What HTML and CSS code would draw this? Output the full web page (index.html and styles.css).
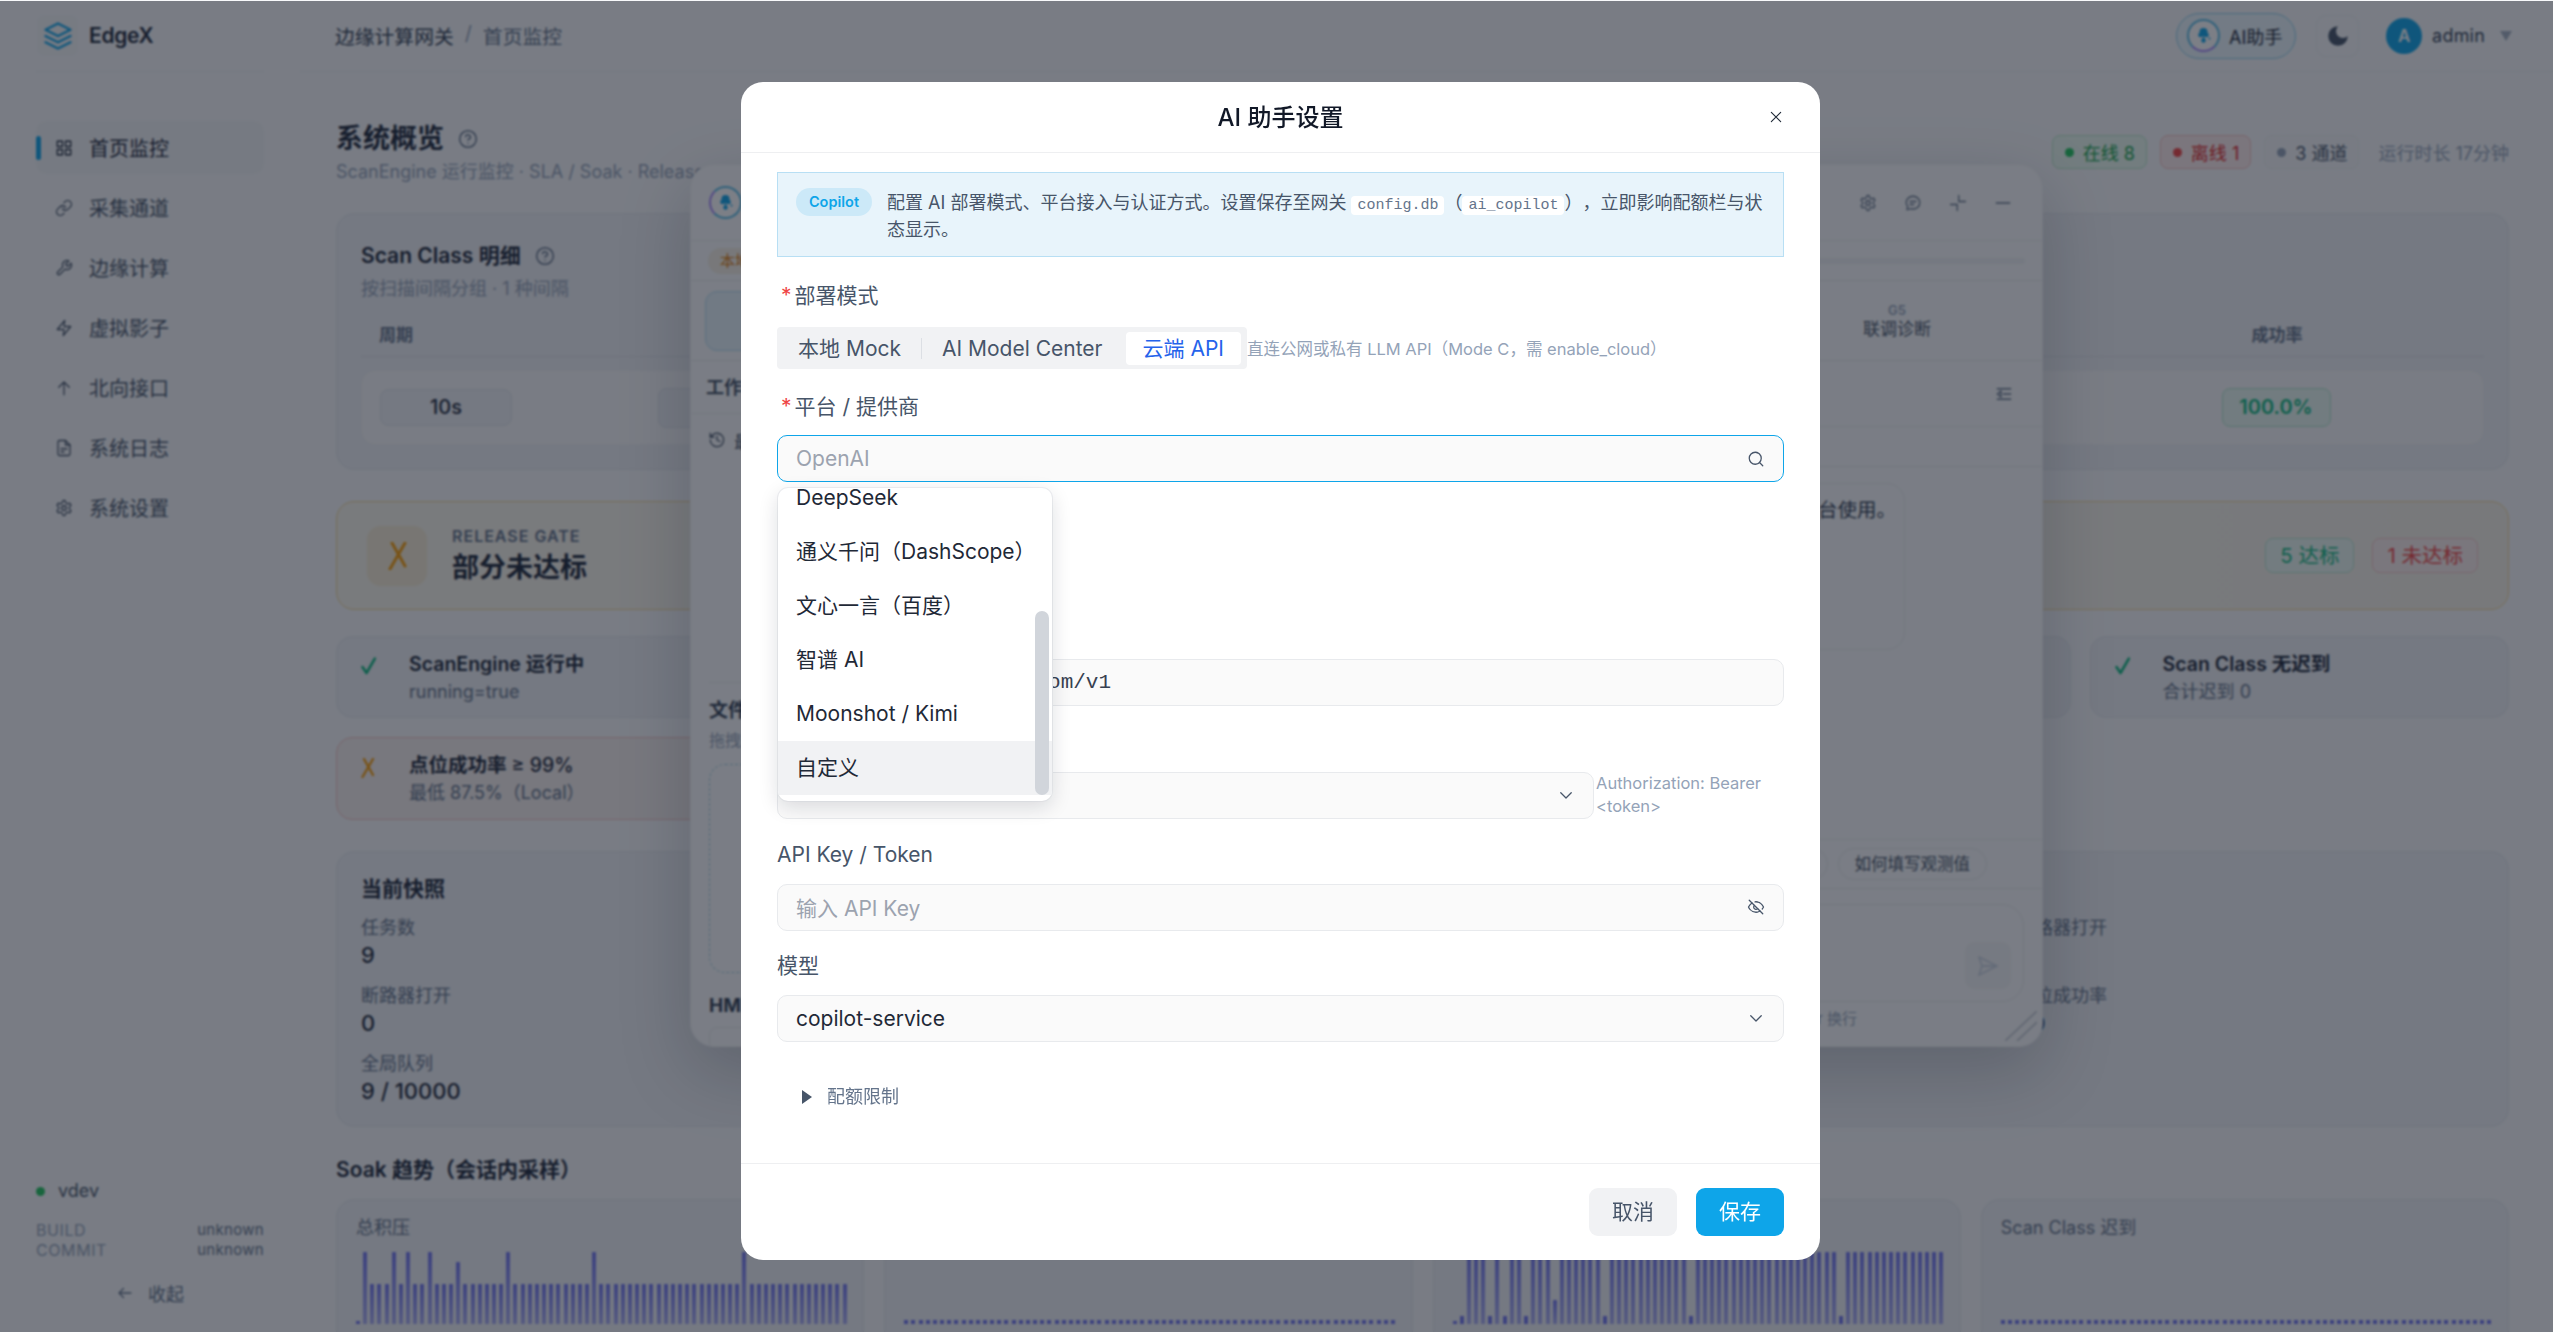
FILE: index.html
```html
<!DOCTYPE html>
<html lang="zh-CN">
<head>
    <meta charset="UTF-8">
    <title>EdgeX - 首页监控</title>
    <link rel="stylesheet" href="styles.css">
</head>
<body>

<div class="app">

    <!-- SIDEBAR -->
    <aside class="sidebar">
        <div class="brand">
            <span class="brand-logo">
                <svg class="ico" viewBox="0 0 24 24" width="30" height="30"><path d="M12 2 2 7l10 5 10-5-10-5z"/><path d="m2 12 10 5 10-5"/><path d="m2 17 10 5 10-5"/></svg>
            </span>
            <span class="brand-name">EdgeX</span>
        </div>
        <nav class="nav">
            <a class="nav-item active">
                <svg class="ico" viewBox="0 0 24 24"><rect x="3" y="3" width="7" height="7"/><rect x="14" y="3" width="7" height="7"/><rect x="3" y="14" width="7" height="7"/><rect x="14" y="14" width="7" height="7"/></svg>
                首页监控
            </a>
            <a class="nav-item">
                <svg class="ico" viewBox="0 0 24 24"><path d="M10 13a5 5 0 0 0 7.54.54l3-3a5 5 0 0 0-7.07-7.07l-1.72 1.71"/><path d="M14 11a5 5 0 0 0-7.54-.54l-3 3a5 5 0 0 0 7.07 7.07l1.71-1.71"/></svg>
                采集通道
            </a>
            <a class="nav-item">
                <svg class="ico" viewBox="0 0 24 24"><path d="M14.7 6.3a1 1 0 0 0 0 1.4l1.6 1.6a1 1 0 0 0 1.4 0l3.77-3.77a6 6 0 0 1-7.94 7.94l-6.91 6.91a2.12 2.12 0 0 1-3-3l6.91-6.91a6 6 0 0 1 7.94-7.94l-3.76 3.76z"/></svg>
                边缘计算
            </a>
            <a class="nav-item">
                <svg class="ico" viewBox="0 0 24 24"><path d="M13 2 3 14h9l-1 8 10-12h-9l1-8z"/></svg>
                虚拟影子
            </a>
            <a class="nav-item">
                <svg class="ico" viewBox="0 0 24 24"><path d="M12 21V4M5 11l7-7 7 7"/></svg>
                北向接口
            </a>
            <a class="nav-item">
                <svg class="ico" viewBox="0 0 24 24"><path d="M14 2H6a2 2 0 0 0-2 2v16a2 2 0 0 0 2 2h12a2 2 0 0 0 2-2V8z"/><path d="M14 2v6h6"/><path d="M16 13H8M12 17H8"/></svg>
                系统日志
            </a>
            <a class="nav-item">
                <svg class="ico" viewBox="0 0 24 24"><path d="M12.22 2h-.44a2 2 0 0 0-2 2v.18a2 2 0 0 1-1 1.73l-.43.25a2 2 0 0 1-2 0l-.15-.08a2 2 0 0 0-2.73.73l-.22.38a2 2 0 0 0 .73 2.73l.15.1a2 2 0 0 1 1 1.72v.51a2 2 0 0 1-1 1.74l-.15.09a2 2 0 0 0-.73 2.73l.22.38a2 2 0 0 0 2.73.73l.15-.08a2 2 0 0 1 2 0l.43.25a2 2 0 0 1 1 1.73V20a2 2 0 0 0 2 2h.44a2 2 0 0 0 2-2v-.18a2 2 0 0 1 1-1.73l.43-.25a2 2 0 0 1 2 0l.15.08a2 2 0 0 0 2.73-.73l.22-.39a2 2 0 0 0-.73-2.73l-.15-.08a2 2 0 0 1-1-1.74v-.5a2 2 0 0 1 1-1.74l.15-.09a2 2 0 0 0 .73-2.73l-.22-.38a2 2 0 0 0-2.73-.73l-.15.08a2 2 0 0 1-2 0l-.43-.25a2 2 0 0 1-1-1.73V4a2 2 0 0 0-2-2z"/><circle cx="12" cy="12" r="3"/></svg>
                系统设置
            </a>
        </nav>
        <div class="side-foot">
            <div class="version"><span class="dot dot-green"></span>vdev</div>
            <div class="build-row"><span>BUILD</span><em>unknown</em></div>
            <div class="build-row"><span>COMMIT</span><em>unknown</em></div>
            <div class="collapse">
                <svg class="ico" viewBox="0 0 24 24" width="20" height="20"><path d="M20 12H4M10 6l-6 6 6 6"/></svg>
                收起
            </div>
        </div>
    </aside>

    <div class="main">

        <!-- TOP BAR -->
        <header class="topbar">
            <div class="crumbs"><span class="crumb-root">边缘计算网关</span><i>/</i><span>首页监控</span></div>
            <div class="top-actions">
                <div class="ai-btn">
                    <span class="ai-icon">
                        <svg viewBox="0 0 24 24" width="24" height="24"><g class="bird"><circle cx="11.500" cy="8" r="4"/><circle cx="8.500" cy="11" r="2.300"/><circle cx="14.500" cy="11" r="2.300"/><rect x="10.800" y="11" width="1.500" height="5"/><circle cx="11.500" cy="16.500" r="2.200"/><circle cx="17.500" cy="14.500" r="1"/></g></svg>
                    </span>
                    AI助手
                </div>
                <div class="theme-btn">
                    <svg viewBox="0 0 24 24" width="26" height="26"><path class="moon" d="M12 3a6 6 0 0 0 9 9 9 9 0 1 1-9-9Z"/></svg>
                </div>
                <span class="avatar">A</span>
                <span class="user">admin</span>
                <span class="caret"></span>
            </div>
        </header>

        <main class="content">

            <div class="page-head">
                <div>
                    <h1>系统概览
                        <svg class="ico help" viewBox="0 0 24 24"><circle cx="12" cy="12" r="10"/><path d="M9.090 9a3 3 0 0 1 5.830 1c0 2-3 3-3 3M12 17h.01"/></svg>
                    </h1>
                    <p class="page-sub">ScanEngine 运行监控 · SLA / Soak · Release Gate 发布门禁</p>
                </div>
                <div class="status-row">
                    <span class="status status-green"><span class="dot dot-green"></span>在线 8</span>
                    <span class="status status-red"><span class="dot dot-red"></span>离线 1</span>
                    <span class="status status-gray"><span class="dot dot-gray"></span>3 通道</span>
                    <span class="uptime">运行时长 17分钟</span>
                </div>
            </div>

            <section class="card scan-card">
                <h2>Scan Class 明细
                    <svg class="ico help" viewBox="0 0 24 24"><circle cx="12" cy="12" r="10"/><path d="M9.090 9a3 3 0 0 1 5.830 1c0 2-3 3-3 3M12 17h.01"/></svg>
                </h2>
                <p class="card-sub">按扫描间隔分组 · 1 种间隔</p>
                <div class="scan-head"><span class="col-first">周期</span><span></span><span class="col-last">成功率</span></div>
                <div class="scan-row">
                    <span class="col-first"><b class="pill">10s</b></span>
                    <span><b class="pill pill-two">9</b></span>
                    <span class="col-last"><b class="pill pill-rate">100.0%</b></span>
                </div>
            </section>

            <section class="gate-card">
                <span class="gate-icon">
                    <svg class="x-mark" viewBox="0 0 19 28" width="19" height="28"><path d="M4 1 17 24M17 1 2 27"/></svg>
                </span>
                <div class="gate-text">
                    <div class="gate-kicker">RELEASE GATE</div>
                    <div class="gate-title">部分未达标</div>
                </div>
                <div class="gate-tags">
                    <span class="gate-tag tag-ok">5 达标</span>
                    <span class="gate-tag tag-bad">1 未达标</span>
                </div>
            </section>

            <div class="gate-grid">
                <div class="gate-item"><span class="mark"><svg class="ok-mark" viewBox="0 0 15 18" width="15" height="18"><path d="M1.500 10 5.500 16 14 1.500"/></svg></span><div><strong>ScanEngine 运行中</strong><small>running=true</small></div></div>
                <div class="gate-item"><span class="mark"><svg class="ok-mark" viewBox="0 0 15 18" width="15" height="18"><path d="M1.500 10 5.500 16 14 1.500"/></svg></span><div><strong>无断路器打开</strong><small>打开 0</small></div></div>
                <div class="gate-item"><span class="mark"><svg class="ok-mark" viewBox="0 0 15 18" width="15" height="18"><path d="M1.500 10 5.500 16 14 1.500"/></svg></span><div><strong>队列未溢出</strong><small>9 / 10000</small></div></div>
                <div class="gate-item"><span class="mark"><svg class="ok-mark" viewBox="0 0 15 18" width="15" height="18"><path d="M1.500 10 5.500 16 14 1.500"/></svg></span><div><strong>任务数正常</strong><small>合计 9</small></div></div>
                <div class="gate-item"><span class="mark"><svg class="ok-mark" viewBox="0 0 15 18" width="15" height="18"><path d="M1.500 10 5.500 16 14 1.500"/></svg></span><div><strong>Scan Class 无迟到</strong><small>合计迟到 0</small></div></div>
                <div class="gate-item gate-item-bad"><span class="mark"><svg class="x-mark" viewBox="0 0 14 20" width="14" height="20"><path d="M3 1 12 17M12 1 1.500 19"/></svg></span><div><strong>点位成功率 <span class="gate-num">≥ 99%</span></strong><small>最低 87.5%（Local）</small></div></div>
            </div>

            <section class="card snap-card">
                <h2>当前快照</h2>
                <div class="snap-grid">
                    <div><label>任务数</label><b>9</b></div>
                    <div><label>断路器打开</label><b></b></div>
                    <div><label>断路器打开</label><b>0</b></div>
                    <div><label>点位成功率</label><b>00</b></div>
                    <div><label>全局队列</label><b>9 / 10000</b></div>
                </div>
            </section>

            <h3 class="soak-title">Soak 趋势（会话内采样）</h3>
            <div class="soak-grid">
                <div class="soak-card"><p>总积压</p><div class="bars" data-kind="peaks"></div></div>
                <div class="soak-card"><p>断路器</p><div class="bars" data-kind="flat"></div></div>
                <div class="soak-card"><p>成功率</p><div class="bars" data-kind="dips"></div></div>
                <div class="soak-card"><p>Scan Class 迟到</p><div class="bars" data-kind="flat"></div></div>
            </div>

        </main>
    </div>
</div>

<!-- AI 助手浮窗 -->
<div class="panel">
    <div class="panel-head">
        <span class="ai-icon ai-icon-panel">
            <svg viewBox="0 0 24 24" width="24" height="24"><g class="bird"><circle cx="11.500" cy="8" r="4"/><circle cx="8.500" cy="11" r="2.300"/><circle cx="14.500" cy="11" r="2.300"/><rect x="10.800" y="11" width="1.500" height="5"/><circle cx="11.500" cy="16.500" r="2.200"/><circle cx="17.500" cy="14.500" r="1"/></g></svg>
        </span>
        <div class="panel-tools">
            <svg class="ico" viewBox="0 0 24 24"><path d="M12.220 2h-.44a2 2 0 0 0-2 2v.18a2 2 0 0 1-1 1.730l-.43.25a2 2 0 0 1-2 0l-.15-.08a2 2 0 0 0-2.730.73l-.22.38a2 2 0 0 0 .73 2.730l.15.1a2 2 0 0 1 1 1.720v.51a2 2 0 0 1-1 1.740l-.15.09a2 2 0 0 0-.73 2.730l.22.38a2 2 0 0 0 2.730.73l.15-.08a2 2 0 0 1 2 0l.43.25a2 2 0 0 1 1 1.730V20a2 2 0 0 0 2 2h.44a2 2 0 0 0 2-2v-.18a2 2 0 0 1 1-1.730l.43-.25a2 2 0 0 1 2 0l.15.08a2 2 0 0 0 2.730-.73l.22-.39a2 2 0 0 0-.73-2.730l-.15-.08a2 2 0 0 1-1-1.740v-.5a2 2 0 0 1 1-1.740l.15-.09a2 2 0 0 0 .73-2.730l-.22-.38a2 2 0 0 0-2.730-.73l-.15.08a2 2 0 0 1-2 0l-.43-.25a2 2 0 0 1-1-1.730V4a2 2 0 0 0-2-2z"/><circle cx="12" cy="12" r="3"/></svg>
            <svg class="ico" viewBox="0 0 24 24"><path d="M12 3c5 0 9 3.600 9 8.500S17 20 12 20c-1 0-2-.1-3-.5L4 21l1-4.500C3.700 15 3 13.300 3 11.500 3 6.600 7 3 12 3z"/><path d="M8 10h8M8 14h5"/></svg>
            <svg class="ico" viewBox="0 0 24 24"><path d="M2 14h9v8M22 10h-9V2"/></svg>
            <svg class="ico" viewBox="0 0 24 24"><path d="M3 12h18"/></svg>
        </div>
    </div>
    <div class="panel-meta">
        <span class="mode-tag">本地 Mock</span>
        <span class="meta-track"></span>
    </div>
    <div class="panel-tabs">
        <div class="tab-current"></div>
        <div class="tab-item"><small>G5</small>联调诊断</div>
    </div>
    <div class="panel-body">
        <div class="panel-side">
            <div class="side-title">工作台</div>
            <div class="side-recent">
                <svg class="ico" viewBox="0 0 24 24"><path d="M3 12a9 9 0 1 0 2.600-6.400L3 8"/><path d="M3 3v5h5M12 7v5l4 2"/></svg>
                <span>最近会话</span>
            </div>
            <div class="side-list"></div>
            <div class="side-file">
                <strong>文件上传</strong>
                <small>拖拽文件到此处</small>
                <div class="drop-zone"></div>
                <strong class="hmi-title">HMI 预览</strong>
                <div class="hmi-box"></div>
            </div>
        </div>
        <div class="panel-chat">
            <div class="chat-bar">
                <svg class="ico" viewBox="0 0 24 24"><path d="M21 5H3M21 12H11M21 19H3M8 8l-5 4 5 4z"/></svg>
            </div>
            <div class="chat-sub"></div>
            <div class="chat-log">
                <div class="bubble">当前为本地 Mock 模式，可在控制台使用。</div>
            </div>
            <div class="chips">
                <span class="chip">查看通道状态</span>
                <span class="chip">如何填写观测值</span>
            </div>
            <div class="composer">
                <div class="composer-box">
                    <span class="send-btn">
                        <svg class="ico" viewBox="0 0 24 24" width="24" height="24"><path d="M3 3l18 9-18 9 3-9-3-9zM6 12h15"/></svg>
                    </span>
                </div>
                <p class="composer-hint">Enter 发送 · Shift+Enter 换行</p>
            </div>
        </div>
    </div>
    <svg class="grip" viewBox="0 0 32 30" width="32" height="30"><path d="M0 30 32 0M12 30 32 11"/></svg>
</div>

<div class="mask"></div>

<!-- AI 助手设置 -->
<div class="modal">
    <div class="modal-head">
        <h3>AI 助手设置</h3>
        <svg class="ico modal-close" viewBox="0 0 24 24" width="16" height="16"><path d="M19 5 5 19M5 5l14 14"/></svg>
    </div>

    <div class="modal-body">
        <div class="notice">
            <span class="notice-tag">Copilot</span>
            <p>配置 AI 部署模式、平台接入与认证方式。设置保存至网关 <code>config.db</code>（<code>ai_copilot</code>），立即影响配额栏与状态显示。</p>
        </div>

        <div class="form-item">
            <label class="req">部署模式</label>
            <div class="mode-row">
                <div class="segment">
                    <span class="seg">本地 Mock</span>
                    <span class="seg seg-line">AI Model Center</span>
                    <span class="seg seg-on">云端 API</span>
                </div>
                <span class="hint hint-mode">直连公网或私有 LLM API（Mode C，需 enable_cloud）</span>
            </div>
        </div>

        <div class="form-item">
            <label class="req">平台 / 提供商</label>
            <div class="field field-focus">
                <span class="placeholder">OpenAI</span>
                <svg class="ico field-ico" viewBox="0 0 24 24" width="17" height="17"><circle cx="11" cy="11" r="8"/><path d="m21 21-4.300-4.300"/></svg>
            </div>
        </div>

        <!-- 下拉框后面的行 -->
        <div class="form-item">
            <label>接入方式</label>
            <div class="field field-short">OpenAI 兼容</div>
        </div>

        <div class="form-item">
            <label>Base URL</label>
            <div class="field field-mono">https://api.openai.com/v1</div>
        </div>

        <div class="form-item form-item-auth">
            <label>认证方式</label>
            <div class="auth-row">
                <div class="field field-auth">
                    <span class="auth-value">Bearer Token</span>
                    <svg class="ico field-ico" viewBox="0 0 24 24" width="17" height="17"><path d="m5 9 7 7 7-7"/></svg>
                </div>
                <span class="hint hint-auth">Authorization: Bearer &lt;token&gt;</span>
            </div>
        </div>

        <div class="form-item form-item-key">
            <label>API Key / Token</label>
            <div class="field">
                <span class="placeholder">输入 API Key</span>
                <svg class="ico field-ico" viewBox="0 0 24 24" width="18" height="18"><path d="M9.880 9.880a3 3 0 1 0 4.240 4.240"/><path d="M10.730 5.080A10.430 10.430 0 0 1 12 5c7 0 10 7 10 7a13.160 13.160 0 0 1-1.670 2.680"/><path d="M6.610 6.610A13.526 13.526 0 0 0 2 12s3 7 10 7a9.740 9.740 0 0 0 5.390-1.610"/><path d="M3 3l18 18"/></svg>
            </div>
        </div>

        <div class="form-item">
            <label>模型</label>
            <div class="field">
                <span>copilot-service</span>
                <svg class="ico field-ico" viewBox="0 0 24 24" width="17" height="17"><path d="m5 9 7 7 7-7"/></svg>
            </div>
        </div>

        <div class="quota"><span class="tri"></span>配额限制</div>
    </div>

    <div class="modal-foot">
        <button class="btn">取消</button>
        <button class="btn btn-primary">保存</button>
    </div>

    <ul class="dropdown">
        <li class="opt-cut">DeepSeek</li>
        <li>通义千问（DashScope）</li>
        <li>文心一言（百度）</li>
        <li>智谱 AI</li>
        <li>Moonshot / Kimi</li>
        <li class="opt-on">自定义</li>
        <span class="thumb"></span>
    </ul>
</div>

<script src="script.js"></script>
</body>
</html>
```

FILE: styles.css
```css
* { box-sizing: border-box; }
html, body { margin: 0; height: 100%; overflow: hidden; }
body { font-family: Inter, "Noto Sans CJK SC", sans-serif; color: #1e293b; background: #f8f9fb; }
h1, h2, h3, p, ul { margin: 0; padding: 0; }
.ico { width: 18px; height: 18px; fill: none; stroke: currentColor; stroke-width: 1.7; stroke-linecap: round; stroke-linejoin: round; flex: none; }
.dot { display: inline-block; width: 9px; height: 9px; border-radius: 50%; }
.dot-green { background: #22c55e; }
.dot-red { background: #ef4444; }
.dot-gray { background: #94a3b8; }

.app { display: flex; height: 1332px; overflow: hidden; }

/* Sidebar */
.sidebar { width: 300px; flex: none; display: flex; flex-direction: column; padding: 0 36px; height: 100%; }
.brand { height: 72px; display: flex; align-items: center; border-bottom: 1px solid #eceef1; }
.brand-logo { width: 41px; height: 41px; border-radius: 8px; background: #f3f5f7; display: flex; align-items: center; justify-content: center; color: #0ea5e9; margin-left: 1px; }
.brand-logo .ico { width: 30px; height: 30px; stroke-width: 1.8; }
.brand-name { margin-left: 11px; font-size: 21px; font-weight: 600; letter-spacing: -0.3px; }
.nav { margin-top: 49px; display: flex; flex-direction: column; gap: 7px; }
.nav-item { height: 53px; display: flex; align-items: center; gap: 16px; padding-left: 19px; font-size: 20px; color: #475569; border-radius: 10px; position: relative; }
.nav-item .ico { color: #475569; }
.nav-item.active { background: #f2f4f6; color: #1e293b; }
.nav-item.active .ico { color: #1e293b; }
.nav-item.active::before { content: ""; position: absolute; left: 0; top: 15px; width: 5px; height: 24px; border-radius: 3px; background: #0ea5e9; }
.side-foot { margin-top: auto; padding-bottom: 25px; }
.version { display: flex; align-items: center; gap: 13px; font-size: 18px; color: #475569; margin-bottom: 16px; line-height: 26px; }
.build-row { display: flex; justify-content: space-between; font-size: 16px; line-height: 20px; color: #94a3b8; letter-spacing: 0.6px; }
.build-row em { font-style: normal; letter-spacing: 0.3px; color: #64748b; font-size: 15px; }
.collapse { display: flex; align-items: center; justify-content: center; gap: 14px; margin-top: 19px; font-size: 18px; color: #64748b; height: 28px; }

/* Top bar */
.main { flex: 1; min-width: 0; }
.topbar { height: 72px; border-bottom: 1px solid #eceef1; display: flex; align-items: center; justify-content: space-between; padding: 0 41px 0 35px; }
.crumbs { font-size: 19.800px; color: #64748b; display: flex; gap: 11px; }
.crumbs i { font-style: normal; color: #94a3b8; }
.crumb-root { color: #334155; }
.top-actions { display: flex; align-items: center; font-size: 18px; }
.ai-btn { display: flex; align-items: center; gap: 9px; width: 120px; height: 46px; padding-left: 10px; border-radius: 23px; border: 1px solid #8fd0ee; background: #eaf6fc; }
.ai-icon { width: 33px; height: 33px; border-radius: 50%; border: 2px solid #5bbde6; border-bottom-color: #a78bfa; background: #fff; display: flex; align-items: center; justify-content: center; }
.bird { fill: #0ea5e9; }
.theme-btn { width: 43px; height: 42px; margin-left: 20px; border: 1px solid #eceef1; border-radius: 10px; display: flex; align-items: center; justify-content: center; }
.moon { fill: #475569; }
.avatar { width: 36px; height: 36px; margin-left: 27px; border-radius: 50%; background: #0ea5e9; color: #fff; font-weight: 600; font-size: 17px; display: flex; align-items: center; justify-content: center; }
.user { margin-left: 10px; color: #334155; letter-spacing: 0.2px; }
.caret { margin-left: 15px; width: 0; height: 0; border-left: 6px solid transparent; border-right: 6px solid transparent; border-top: 10px solid #a3afc0; }

/* Page */
.content { padding: 49px 44px 0 36px; }
.page-head { display: flex; justify-content: space-between; align-items: flex-start; margin-bottom: 28px; }
h1 { font-size: 27px; line-height: 36px; font-weight: 700; display: flex; align-items: center; gap: 14px; }
.help { width: 20px; height: 20px; color: #64748b; stroke-width: 1.8; }
.page-sub { font-size: 18px; line-height: 26px; color: #94a3b8; margin-top: 2px; white-space: nowrap; }
.status-row { display: flex; align-items: center; gap: 13px; margin-top: 14px; font-size: 18px; }
.status { height: 34px; display: flex; align-items: center; gap: 9px; padding: 0 11px 0 12px; border-radius: 8px; border: 1px solid; }
.status-green { color: #16a34a; background: #eafaf0; border-color: #bbe9cb; }
.status-red { color: #dc2626; background: #fdecec; border-color: #f6c1c1; }
.status-gray { color: #475569; background: #f6f7f9; border-color: #eceef1; }
.uptime { color: #94a3b8; margin-left: 6px; }

.card { background: #eff1f5; border: 1px solid #e5e8ed; border-radius: 18px; padding: 0 24px; }
h2 { font-size: 21px; font-weight: 600; display: flex; align-items: center; gap: 14px; }
.scan-card { height: 257px; padding-top: 28px; }
.scan-card h2 { line-height: 28px; }
.card-sub { font-size: 18px; line-height: 24px; color: #94a3b8; margin-top: 7px; }
.scan-head, .scan-row { display: grid; grid-template-columns: 296px 1fr 414px; align-items: center; }
.scan-head { height: 44px; margin-top: 12px; padding-bottom: 2px; border-bottom: 1px solid #dfe3e9; font-size: 17px; font-weight: 700; color: #64748b; }
.scan-row { height: 75px; margin-top: 13px; background: #f9f9fa; border: 1px solid #f0f1f3; border-radius: 14px; }
.col-first { padding-left: 18px; }
.col-last { text-align: center; }
.pill { display: inline-block; width: 132px; height: 37px; line-height: 35px; text-align: center; border: 1px solid #e2e6ec; border-radius: 8px; background: #eff1f5; font-size: 20px; font-weight: 500; }
.pill-two { width: 120px; height: 40px; }
.pill-rate { width: 109px; height: 39px; line-height: 37px; color: #10b981; background: #e8f8f1; border-color: #b3e6d0; font-weight: 600; }

.gate-card { height: 109px; margin-top: 31px; display: flex; align-items: center; padding: 0 30px; border: 1px solid #f3d99a; border-radius: 18px; background: linear-gradient(90deg, #f9f5ea, #f7f5ee 50%, #f6f2e7); }
.gate-icon { width: 60px; height: 60px; border-radius: 14px; background: #f6ecd4; display: flex; align-items: center; justify-content: center; }
.x-mark { fill: none; stroke: #f59e0b; stroke-width: 3; stroke-linecap: round; }
.ok-mark { fill: none; stroke: #10b981; stroke-width: 2.600; stroke-linecap: round; stroke-linejoin: round; }
.gate-text { margin-left: 25px; }
.gate-kicker { font-size: 16px; line-height: 22px; font-weight: 600; color: #64748b; letter-spacing: 1px; }
.gate-title { font-size: 27px; line-height: 38px; font-weight: 700; padding-top: 2px; }
.gate-tags { margin-left: auto; display: flex; gap: 18px; }
.gate-tag { height: 35px; line-height: 33px; padding: 0 14px; border: 1px solid; border-radius: 8px; font-size: 20.500px; }
.tag-ok { color: #10b981; background: #ecf8f2; border-color: #b7e7d2; }
.tag-bad { color: #ef4444; background: #fbeeec; border-color: #f6c7c7; }

.gate-grid { display: grid; grid-template-columns: repeat(5, minmax(0, 1fr)); gap: 19px; margin-top: 26px; }
.gate-item { height: 82px; display: flex; padding: 14px 24px 0; gap: 17px; border: 1px solid #e5e8ed; border-radius: 16px; background: #eff1f5; }
.gate-item-bad { border-color: #f3c4c4; background: #f5efed; height: 83px; }
.gate-item strong { display: block; font-size: 19.500px; line-height: 27px; font-weight: 600; white-space: nowrap; }
.gate-item small { display: block; font-size: 18px; line-height: 27px; color: #64748b; white-space: nowrap; }
.gate-num { font-weight: 500; }
.mark { width: 31px; flex: none; padding-top: 6px; }
.mark svg { display: block; }
.gate-item-bad .x-mark { stroke-width: 2.400; }

.snap-card { height: 276px; margin-top: 31px; padding-top: 24px; }
.snap-card h2 { line-height: 26px; font-weight: 700; }
.snap-grid { display: grid; grid-template-columns: 1656px 1fr; gap: 14px 0; margin-top: 13px; }
.snap-grid label { display: block; font-size: 18px; line-height: 26px; color: #64748b; }
.snap-grid b { display: block; font-size: 22px; line-height: 28px; font-weight: 500; min-height: 28px; }

.soak-title { margin-top: 29px; font-size: 21px; line-height: 28px; font-weight: 600; }
.soak-grid { display: grid; grid-template-columns: repeat(4, minmax(0, 1fr)); gap: 20px; margin-top: 15px; }
.soak-card { height: 160px; padding: 16px 19px 0; background: #eff1f5; border: 1px solid #e5e8ed; border-radius: 18px; }
.soak-card p { font-size: 18px; line-height: 24px; color: #64748b; }
.bars { height: 72px; margin-top: 12px; display: flex; align-items: flex-end; gap: 3.170px; }
.bars i { display: block; width: 4px; flex: none; border-radius: 1px 1px 0 0; background: linear-gradient(#7378f0, rgba(115, 120, 240, 0.55)); }
.bars i.low { border-radius: 0; background: #7378f0; }

/* Floating panel */
.panel { position: absolute; left: 690px; top: 164px; width: 1353px; height: 883px; border-radius: 24px; background: #fafbfc; border: 1px solid #f0f1f3; box-shadow: 0 24px 70px rgba(15, 23, 42, 0.22); overflow: hidden; color: #334155; display: flex; flex-direction: column; }
.panel-head { height: 76px; flex: none; display: flex; align-items: center; justify-content: space-between; padding: 0 30px 0 18px; border-bottom: 1px solid #eceef1; }
.ai-icon-panel { border-color: #5bbde6; border-left-color: #a78bfa; border-bottom-color: #5bbde6; }
.panel-tools { display: flex; gap: 27px; color: #64748b; }
.panel-meta { height: 40px; flex: none; display: flex; align-items: center; justify-content: space-between; padding: 0 17px; border-bottom: 1px solid #e8eaee; }
.mode-tag { height: 26px; line-height: 26px; padding: 0 12px; border-radius: 13px; background: #f5efe4; color: #d97706; font-size: 15px; }
.meta-track { width: 500px; height: 6px; border-radius: 3px; background: #eff1f4; }
.panel-tabs { height: 80px; flex: none; display: flex; align-items: center; justify-content: space-between; padding: 0 100px 0 14px; border-bottom: 1px solid #e8eaee; }
.tab-current { width: 200px; height: 60px; border-radius: 12px; background: #e6f3fa; border: 1px solid #b8def2; }
.tab-item { width: 90px; text-align: center; font-size: 17px; line-height: 22px; color: #475569; }
.tab-item small { display: block; font-size: 13px; line-height: 16px; font-weight: 600; color: #94a3b8; }
.panel-body { flex: 1; display: flex; min-height: 0; }
.panel-side { width: 420px; flex: none; }
.side-title { height: 53px; line-height: 53px; padding-left: 15px; font-size: 18px; font-weight: 700; color: #475569; border-bottom: 1px solid #eceef1; }
.side-recent { display: flex; align-items: center; gap: 8px; height: 52px; padding-left: 17px; font-size: 17px; color: #475569; }
.side-list { height: 217px; margin-left: 18px; border-bottom: 1px solid #eceef1; }
.side-file { padding: 14px 18px 0; }
.side-file strong { display: block; font-size: 19px; line-height: 28px; font-weight: 700; white-space: nowrap; }
.side-file small { display: block; font-size: 16px; line-height: 30px; color: #94a3b8; }
.drop-zone { height: 209px; margin-top: 9px; border: 1.5px dashed #a9cfe4; border-radius: 16px; }
.hmi-title { margin-top: 19px; }
.hmi-box { height: 40px; margin-top: 7px; border: 1px solid #e8eaee; border-radius: 8px; }
.panel-chat { flex: 1; min-width: 0; display: flex; flex-direction: column; }
.chat-bar { height: 66px; flex: none; display: flex; align-items: center; justify-content: flex-end; padding: 0 29px; color: #64748b; border-bottom: 1px solid #eceef1; }
.chat-sub { height: 40px; flex: none; border-bottom: 1px solid #e8eaee; }
.chat-log { flex: 1; display: flex; justify-content: flex-end; padding: 16px 137px 0 0; }
.bubble { width: 600px; height: 167px; padding: 12px 8px; border: 1px solid #eceef1; border-radius: 18px; font-size: 19.500px; line-height: 28px; text-align: right; background: #fafbfc; }
.chips { height: 50px; flex: none; display: flex; align-items: center; justify-content: flex-end; gap: 10px; padding-right: 55px; border-top: 1px solid #eceef1; border-bottom: 1px solid #e8eaee; }
.chip { height: 32px; line-height: 30px; padding: 0 16px; border: 1px solid #e8eaee; border-radius: 16px; font-size: 16.500px; color: #475569; white-space: nowrap; }
.composer { height: 157px; flex: none; padding: 15px 18px 0 0; }
.composer-box { height: 98px; width: 780px; margin-left: auto; border: 1px solid #e8eaee; border-radius: 22px; display: flex; justify-content: flex-end; align-items: flex-end; padding: 0 12px 12px 0; }
.send-btn { width: 46px; height: 47px; border-radius: 10px; background: #f2f3f5; color: #cbd5e1; display: flex; align-items: center; justify-content: center; }
.send-btn .ico { width: 24px; height: 24px; stroke-width: 1.8; }
.composer-hint { margin-top: 5px; padding-right: 167px; font-size: 15px; line-height: 24px; color: #94a3b8; text-align: right; }
.grip { position: absolute; right: 5px; bottom: 5px; fill: none; stroke: #cbd0d8; stroke-width: 2; }

/* Mask and dialog */
.mask { position: fixed; inset: 1px 0 0 0; background: rgba(17, 22, 34, 0.55); backdrop-filter: blur(1px); }
.modal { position: absolute; left: 741px; top: 82px; width: 1079px; height: 1178px; border-radius: 22px; background: #fff; display: flex; flex-direction: column; }
.modal-head { height: 71px; flex: none; position: relative; border-bottom: 1px solid #eeeff1; }
.modal-head h3 { font-size: 24px; line-height: 71px; font-weight: 500; text-align: center; color: #111827; }
.modal-close { position: absolute; right: 36px; top: 27px; width: 16px; height: 16px; color: #1f2937; }
.modal-body { flex: 1; padding: 19px 36px 0; min-height: 0; }
.notice { height: 85px; display: flex; gap: 15px; padding: 15px 12px 0 18px; background: #e8f4fb; border: 1px solid #b8dff4; }
.notice-tag { flex: none; width: 76px; height: 28px; line-height: 28px; text-align: center; border-radius: 14px; background: #cce9f8; color: #0ea5e9; font-size: 14.500px; font-weight: 600; }
.notice p { font-size: 18px; line-height: 27px; padding-top: 1px; color: #475569; text-spacing-trim: space-all; }
.notice code { font: 15px "Liberation Mono", monospace; background: #fff; padding: 1px 6px; border-radius: 4px; color: #64748b; }
.form-item { margin-top: 21px; }
.notice + .form-item { margin-top: 25px; }
.form-item label { display: block; font-size: 21px; line-height: 28px; color: #475569; margin-bottom: 15px; }
.req::before { content: "*"; color: #ef4444; margin: 0 3px 0 4px; }
.mode-row { display: flex; align-items: center; margin-top: 17px; padding-bottom: 3px; }
.segment { display: flex; align-items: center; width: 470px; height: 42px; padding: 4px; background: #f1f2f4; border-radius: 4px; font-size: 21px; color: #475569; }
.seg { padding: 0 20px 0 17px; line-height: 33px; white-space: nowrap; }
.seg-line { position: relative; padding-left: 21px; padding-right: 23px; }
.seg-line::before { content: ""; position: absolute; left: 0; top: 6px; height: 21px; width: 1px; background: #dcdfe4; }
.seg-on { background: #fff; color: #2563eb; border-radius: 4px; padding: 0 17px; }
.hint { font-size: 16.500px; line-height: 23px; color: #94a3b8; }
.hint-mode { margin-top: 2px; }
.field { height: 47px; display: flex; align-items: center; justify-content: space-between; padding: 0 18px; border: 1px solid #e8eaed; border-radius: 10px; background: #fafafa; font-size: 21px; color: #1f2937; }
.field-focus { border: 1.5px solid #0ea5e9; margin-top: -1px; }
.placeholder { color: #9ca3af; }
.field-ico { color: #475569; }
.field-short { width: 260px; height: 48.500px; }
.field-mono { font: 21px "Liberation Mono", monospace; color: #374151; }
.form-item-auth { margin-top: 23px; }
.form-item-key { margin-top: 22px; }
.auth-row { display: flex; align-items: center; }
.field-auth { width: 817px; flex: none; }
.auth-value { margin-bottom: 12px; }
.hint-auth { margin-left: 2px; width: 170px; }
.quota { display: flex; align-items: center; margin-top: 43px; padding-left: 25px; font-size: 18px; line-height: 24px; color: #64748b; }
.tri { width: 0; height: 0; border-left: 10px solid #475569; border-top: 7px solid transparent; border-bottom: 7px solid transparent; margin-right: 15px; }
.modal-foot { height: 97px; flex: none; display: flex; justify-content: flex-end; align-items: center; gap: 19px; padding: 0 36px; border-top: 1px solid #eeeff1; }
.btn { width: 88px; height: 48px; padding: 0 0 4px; border: none; border-radius: 9px; background: #f1f2f4; color: #475569; font: 21px Inter, "Noto Sans CJK SC", sans-serif; }
.btn-primary { background: #0ea5e9; color: #fff; }
.dropdown { position: absolute; left: 37px; top: 406px; width: 274px; height: 313px; list-style: none; overflow: hidden; background: #fff; border-radius: 10px; box-shadow: 0 6px 20px rgba(15, 23, 42, 0.14), 0 0 0 1px #f1f2f4; font-size: 21px; color: #1f2937; padding-top: 37px; }
.dropdown li { height: 54px; line-height: 54px; padding-left: 18px; white-space: nowrap; }
.dropdown .opt-cut { margin-top: -54px; }
.dropdown .opt-on { background: #f1f2f4; }
.thumb { position: absolute; right: 3px; top: 123px; width: 14px; height: 184px; border-radius: 7px; background: #d1d5db; }
```

FILE: script.js
```js
// bar data for the soak charts
var TOTAL = 69;
var PEAK_AT = [1, 5, 7, 10, 21, 33, 54];

function barHeight(kind, i) {
    if (kind === 'flat') return 4;
    if (i === 0) return 3;
    var isPeak = PEAK_AT.indexOf(i) !== -1;
    if (kind === 'peaks') {
        if (i === 14) return 62;
        return isPeak ? 72 : 40;
    }
    if (i === 14) return 24;
    return isPeak ? 8 : 72;
}

document.querySelectorAll('.bars').forEach(function (box) {
    var kind = box.dataset.kind;
    for (var i = 0; i < TOTAL; i++) {
        var bar = document.createElement('i');
        var h = barHeight(kind, i);
        bar.style.height = h + 'px';
        if (h < 10) bar.className = 'low';
        box.appendChild(bar);
    }
});
```
